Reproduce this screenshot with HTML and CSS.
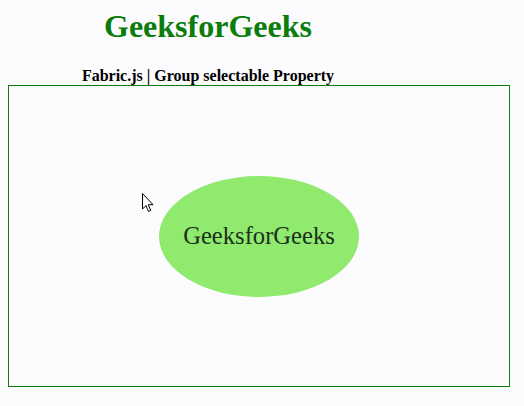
FILE: index.html
```html
<!DOCTYPE html>
<html>
<head>
<meta charset="utf-8">
<link rel="stylesheet" href="styles.css">
</head>
<body>
<div class="header">
  <h1 class="title">GeeksforGeeks</h1>
  <h3 class="subtitle">Fabric.js | Group selectable Property</h3>
</div>
<div class="canvas">
  <div class="group">
    <span class="label">GeeksforGeeks</span>
  </div>
  <svg class="cursor" width="12" height="20" viewBox="0 0 12 20">
    <path d="M0.5 0.5 L0.5 16 L4 12.5 L6.5 18.5 L8.8 17.5 L6.3 11.7 L11 11.7 Z" fill="#fff" stroke="#000" stroke-width="1" stroke-linejoin="miter"/>
  </svg>
</div>
</body>
</html>
```

FILE: styles.css
```css
html, body {
  background: #fcfcff;
}
body {
  margin: 8px;
  font-family: "Liberation Serif", "Times New Roman", serif;
}
.header {
  width: 400px;
  text-align: center;
}
.title {
  margin: 0;
  font-size: 32px;
  font-weight: bold;
  color: #0a7d0a;
  line-height: 37px;
}
.subtitle {
  margin: 22px 0 0 0;
  font-size: 16px;
  font-weight: bold;
  line-height: 18px;
  color: #000;
}
.canvas {
  position: relative;
  width: 500px;
  height: 300px;
  border: 1px solid #0a7d0a;
  display: flex;
  justify-content: center;
  align-items: center;
}
.group {
  width: 200px;
  height: 121px;
  border-radius: 50%;
  background: #8fea6e;
  display: flex;
  justify-content: center;
  align-items: center;
}
.label {
  font-size: 24.6px;
  color: #1b2f1b;
  line-height: 28px;
}
.cursor {
  position: absolute;
  left: 133px;
  top: 107px;
}
```
